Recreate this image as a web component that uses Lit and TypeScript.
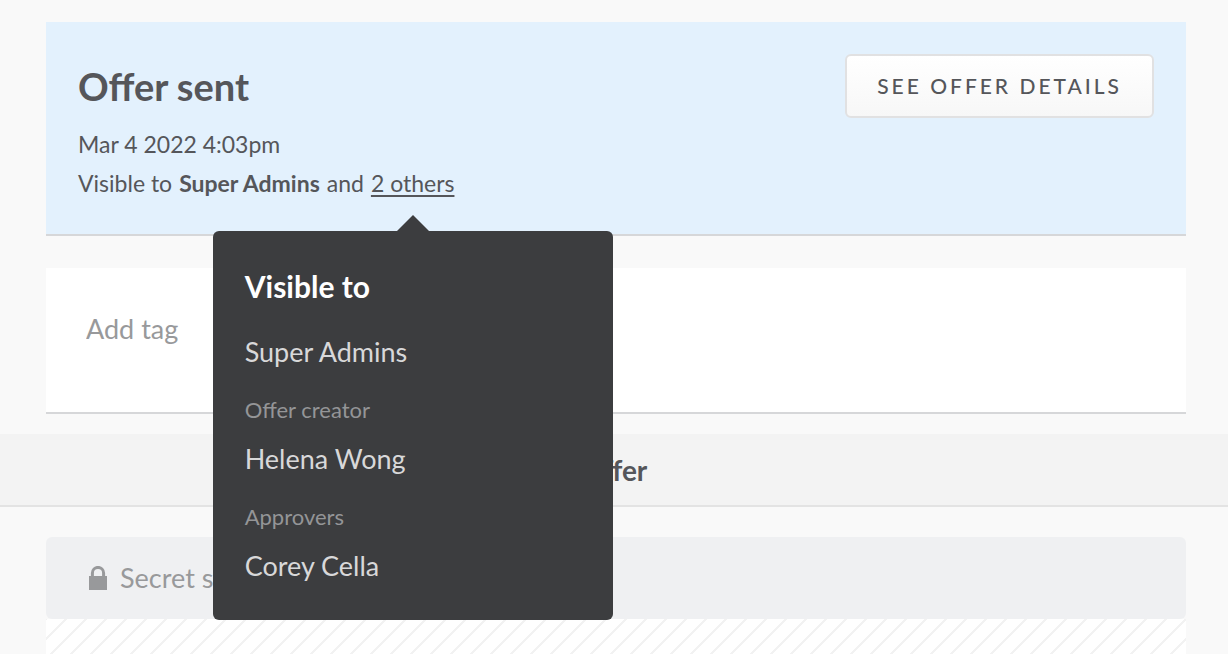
import { LitElement, html, css, svg } from "lit";
import { customElement, property } from "lit/decorators.js";

interface ViewerGroup {
  role: string;
  name: string;
}

const lockIcon = svg`<svg class="lock" viewBox="0 0 18 24" aria-hidden="true">
  <path d="M3.4 11V7a5.6 5.6 0 0 1 11.2 0v4" fill="none" stroke="currentColor" stroke-width="3"></path>
  <path d="M0 10h18v14H0z" fill="currentColor"></path>
</svg>`;

@customElement("visible-to-popover")
export class VisibleToPopover extends LitElement {
  @property({ attribute: false }) groups: ViewerGroup[] = [];

  static styles = css`
    :host {
      display: block;
      box-sizing: border-box;
      width: 400px;
      padding: 35px 32px 34px;
      border-radius: 6px;
      background: #3c3d3f;
      color: #d8d8d9;
      font-size: 27px;
      line-height: 40px;
      white-space: normal;
    }
    :host::before {
      content: "";
      position: absolute;
      top: -16px;
      left: 50%;
      margin-left: -16px;
      border: 16px solid transparent;
      border-top: 0;
      border-bottom-color: #3c3d3f;
    }
    .title {
      margin: 0 0 26px;
      color: #fff;
      font-size: 30px;
      font-weight: 700;
      line-height: 40px;
    }
    .list {
      margin: 0;
    }
    .role {
      margin-top: 20px;
      color: #949597;
      font-size: 22px;
      line-height: 36px;
    }
    .name {
      margin: 0;
      padding-top: 11px;
    }
    .lead {
      margin: 0;
    }
  `;

  render() {
    return html`
      <h2 class="title">Visible to</h2>
      <p class="lead">Super Admins</p>
      <dl class="list">
        ${this.groups.map(
          (g) => html`<dt class="role">${g.role}</dt><dd class="name">${g.name}</dd>`
        )}
      </dl>
    `;
  }
}

@customElement("app-root")
export class AppRoot extends LitElement {
  private groups: ViewerGroup[] = [
    { role: "Offer creator", name: "Helena Wong" },
    { role: "Approvers", name: "Corey Cella" },
  ];

  static styles = css`
    :host {
      display: flex;
      flex-direction: column;
      box-sizing: border-box;
      height: 100vh;
      overflow: hidden;
      padding-top: 22px;
      background: #f9f9f9;
      color: #55565a;
      font-family: Lato, "Open Sans", sans-serif;
    }
    .card {
      margin: 0 42px 0 46px;
      border-bottom: 2px solid #d6d7d9;
    }
    .offer {
      display: flex;
      justify-content: space-between;
      align-items: flex-start;
      padding: 32px 32px 31px;
      background: #e3f1fd;
    }
    .heading {
      margin: 0 0 7px;
      font-size: 38px;
      font-weight: 700;
      line-height: 64px;
    }
    .line {
      margin: 0;
      font-size: 23px;
      line-height: 39px;
      white-space: nowrap;
    }
    .viewers {
      display: flex;
      gap: 7px;
    }
    .anchor {
      position: relative;
    }
    .others {
      color: inherit;
      text-decoration: underline;
      text-decoration-thickness: 2px;
      text-underline-offset: 3px;
    }
    .popover {
      position: absolute;
      z-index: 2;
      top: 67px;
      left: 50%;
      transform: translateX(-50%);
    }
    .details {
      padding: 0 30px;
      border: 2px solid #e1e1e2;
      border-radius: 6px;
      background: linear-gradient(#fff, #f7f7f7);
      color: #55565a;
      font: 500 21px/60px Lato, "Open Sans", sans-serif;
      letter-spacing: 3px;
      text-transform: uppercase;
    }
    .tags {
      margin-top: 32px;
      padding: 39px 40px 61px;
      background: #fff;
    }
    .tag-input {
      display: block;
      box-sizing: border-box;
      width: 100%;
      height: 44px;
      padding: 0;
      border: 0;
      outline: 0;
      background: none;
      color: inherit;
      font: 27px/44px Lato, "Open Sans", sans-serif;
    }
    .tag-input::placeholder {
      color: #98999b;
      opacity: 1;
    }
    .band {
      margin: 20px 0 30px;
      padding: 2px 0 0;
      border-bottom: 2px solid #e3e3e3;
      background: #f3f3f3;
      font-size: 28px;
      font-weight: 700;
      line-height: 69px;
      text-align: center;
    }
    .secret {
      display: flex;
      align-items: center;
      gap: 13px;
      margin: 0 42px 0 46px;
      padding: 20px 43px;
      border-radius: 6px;
      background: #eff0f2;
      color: #98999b;
      font-size: 27px;
      line-height: 42px;
    }
    .lock {
      width: 18px;
      height: 24px;
    }
    .hatch {
      flex: 1 0 35px;
      margin: 0 42px 0 46px;
      background: #fff
        linear-gradient(
          135deg,
          #f2f2f2 0 3%,
          transparent 5% 45%,
          #f2f2f2 47% 53%,
          transparent 55% 95%,
          #f2f2f2 97%
        )
        0 0 / 20px 20px;
    }
  `;

  render() {
    return html`
      <section class="card offer">
        <div>
          <h1 class="heading">Offer sent</h1>
          <p class="line">Mar 4 2022 4:03pm</p>
          <div class="line viewers">
            <span>Visible to</span>
            <strong>Super Admins</strong>
            <span>and</span>
            <span class="anchor"
              ><a class="others" href="#viewers">2 others</a
              ><visible-to-popover
                class="popover"
                id="viewers"
                .groups=${this.groups}
              ></visible-to-popover
            ></span>
          </div>
        </div>
        <button class="details" type="button">See offer details</button>
      </section>
      <section class="card tags">
        <input class="tag-input" type="text" placeholder="Add tag" aria-label="Add tag" />
      </section>
      <h2 class="band">Offer</h2>
      <div class="secret">${lockIcon}<span>Secret s</span></div>
      <div class="hatch"></div>
    `;
  }
}
